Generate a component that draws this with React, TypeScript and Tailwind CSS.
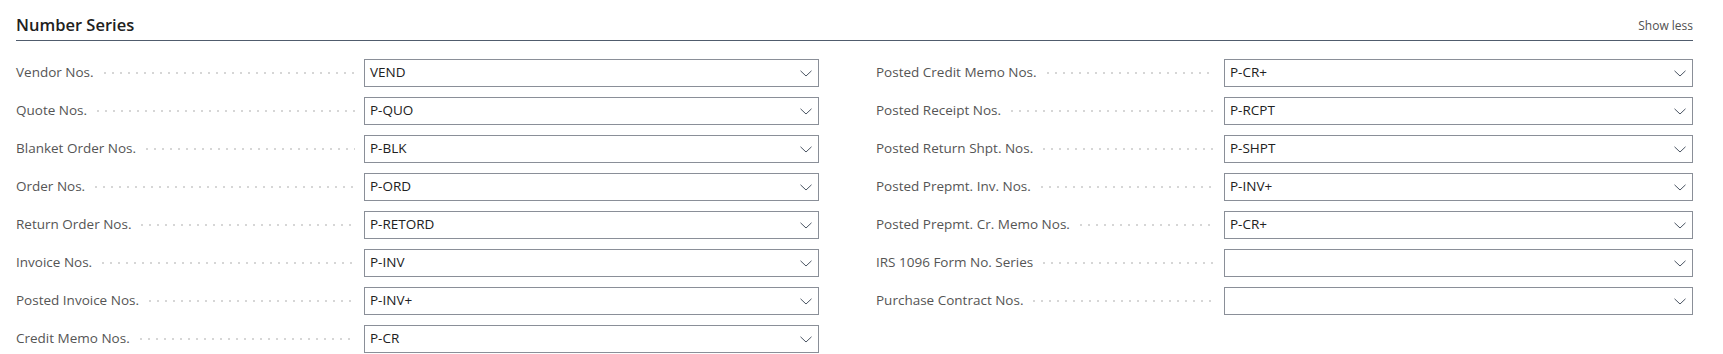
import React from "react";

const left: [string, string][] = [
  ["Vendor Nos.", "VEND"],
  ["Quote Nos.", "P-QUO"],
  ["Blanket Order Nos.", "P-BLK"],
  ["Order Nos.", "P-ORD"],
  ["Return Order Nos.", "P-RETORD"],
  ["Invoice Nos.", "P-INV"],
  ["Posted Invoice Nos.", "P-INV+"],
  ["Credit Memo Nos.", "P-CR"],
];

const right: [string, string][] = [
  ["Posted Credit Memo Nos.", "P-CR+"],
  ["Posted Receipt Nos.", "P-RCPT"],
  ["Posted Return Shpt. Nos.", "P-SHPT"],
  ["Posted Prepmt. Inv. Nos.", "P-INV+"],
  ["Posted Prepmt. Cr. Memo Nos.", "P-CR+"],
  ["IRS 1096 Form No. Series", ""],
  ["Purchase Contract Nos.", ""],
];

function Chevron() {
  return (
    <svg width="12" height="7" viewBox="0 0 12 7" className="shrink-0">
      <path d="M0.5 0.8 L6 6 L11.5 0.8" fill="none" stroke="#4a5563" strokeWidth="1" />
    </svg>
  );
}

function Row({ label, value, inputW }: { label: string; value: string; inputW: string }) {
  return (
    <div className="flex items-center h-[28px] mb-[10px]">
      <div className="flex items-center w-[348px] shrink-0 pr-[9px]">
        <span className="text-[13.5px] text-[#555555] whitespace-nowrap leading-none">{label}</span>
        <div className="flex-1 ml-[10px] h-[2px] bg-[linear-gradient(to_right,#d6d6d6_2px,transparent_2px)] bg-[length:8px_2px] bg-repeat-x" />
      </div>
      <div className={`${inputW} h-[28px] border border-[#8a8f98] flex items-center pl-[5px] pr-[6px]`}>
        <span className="flex-1 text-[13.5px] text-[#212121] leading-none">{value}</span>
        <Chevron />
      </div>
    </div>
  );
}

export default function App() {
  return (
    <div
      className="w-[1723px] h-[354px] bg-white overflow-hidden pl-[16px] pr-[30px]"
      style={{ fontFamily: '"Segoe UI", "Open Sans", "Noto Sans", sans-serif' }}
    >
      <div className="flex items-end justify-between h-[41px] border-b border-[#505c6d] pb-[7px]">
        <span className="text-[16.5px] font-semibold text-[#212121] leading-none">Number Series</span>
        <span className="text-[12px] text-[#505050] leading-none mb-[1px]">Show less</span>
      </div>
      <div className="flex pt-[18px]">
        <div className="w-[803px] shrink-0">
          {left.map(([l, v]) => (
            <Row key={l} label={l} value={v} inputW="w-[455px]" />
          ))}
        </div>
        <div className="ml-[57px] w-[817px]">
          {right.map(([l, v]) => (
            <Row key={l} label={l} value={v} inputW="w-[470px]" />
          ))}
        </div>
      </div>
    </div>
  );
}
